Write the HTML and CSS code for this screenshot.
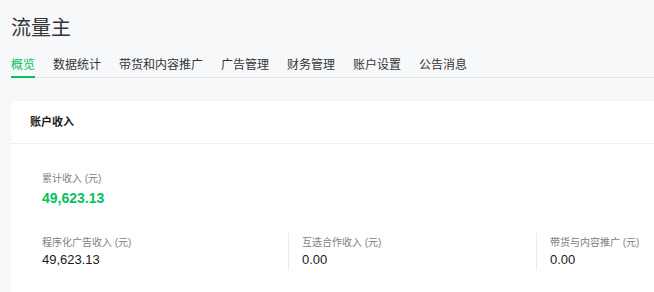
FILE: index.html
```html
<!DOCTYPE html>
<html lang="zh-CN">
<head>
  <meta charset="UTF-8" />
  <meta name="viewport" content="width=device-width, initial-scale=1.0"/>
  <title>流量主</title>
  <link rel="stylesheet" href="styles.css">
</head>
<body>

  <div class="page">
    <!-- Page title -->
    <h1 class="page-title">流量主</h1>

    <!-- Tabs -->
    <nav class="tabs">
      <a class="tab active">概览</a>
      <a class="tab">数据统计</a>
      <a class="tab">带货和内容推广</a>
      <a class="tab">广告管理</a>
      <a class="tab">财务管理</a>
      <a class="tab">账户设置</a>
      <a class="tab">公告消息</a>
    </nav>

    <!-- Income card -->
    <section class="card">
      <div class="card-header">账户收入</div>
      <div class="card-body">
        <div class="total">
          <div class="label">累计收入 (元)</div>
          <div class="total-value">49,623.13</div>
        </div>
        <div class="stats">
          <div class="stat">
            <div class="label">程序化广告收入 (元)</div>
            <div class="stat-value">49,623.13</div>
          </div>
          <div class="stat">
            <div class="label">互选合作收入 (元)</div>
            <div class="stat-value">0.00</div>
          </div>
          <div class="stat">
            <div class="label">带货与内容推广 (元)</div>
            <div class="stat-value">0.00</div>
          </div>
        </div>
      </div>
    </section>
  </div>

</body>
</html>
```

FILE: styles.css
```css
* {
  box-sizing: border-box;
}

body {
  margin: 0;
  padding: 0;
  font-family: "Liberation Sans", "Noto Sans CJK SC", sans-serif;
  background: #f7f8fa;
  color: #333;
  height: 100vh;
  overflow: hidden;
}

.page {
  padding: 14px 0 0 11px;
}

.page-title {
  margin: 0;
  font-size: 20px;
  line-height: 28px;
  font-weight: 400;
  color: #353535;
}

/* Tabs */
.tabs {
  display: flex;
  gap: 18px;
  margin-top: 13px;
  border-bottom: 1px solid #e3e4e6;
}

.tab {
  font-size: 12px;
  line-height: 20px;
  padding-bottom: 1px;
  border-bottom: 2px solid transparent;
  margin-bottom: -1px;
  color: #353535;
  cursor: pointer;
}

.tab.active {
  color: #07c160;
  border-bottom-color: #07c160;
}

/* Card */
.card {
  margin-top: 23px;
  width: 760px;
  background: #fff;
  border-radius: 4px;
  box-shadow: 0 0 2px rgba(0, 0, 0, 0.06);
}

.card-header {
  height: 43px;
  line-height: 42px;
  padding: 0 19px;
  font-size: 11px;
  font-weight: 700;
  color: #1a1a1a;
  border-bottom: 1px solid #eeeff1;
}

.card-body {
  padding: 27px 0 24px 31px;
}

.label {
  font-size: 10px;
  line-height: 16px;
  color: #808080;
}

.total-value {
  font-size: 14px;
  line-height: 20px;
  font-weight: 600;
  color: #07c160;
  margin-top: 1px;
}

.stats {
  display: flex;
  margin-top: 25px;
}

.stat {
  flex: none;
  width: 248px;
  padding-top: 2px;
  padding-bottom: 1px;
}

.stat:first-child {
  width: 246px;
}

.stat + .stat {
  border-left: 1px solid #ebebeb;
  padding-left: 13px;
}

.stat-value {
  font-size: 13px;
  line-height: 18px;
  color: #1a1a1a;
}
```
